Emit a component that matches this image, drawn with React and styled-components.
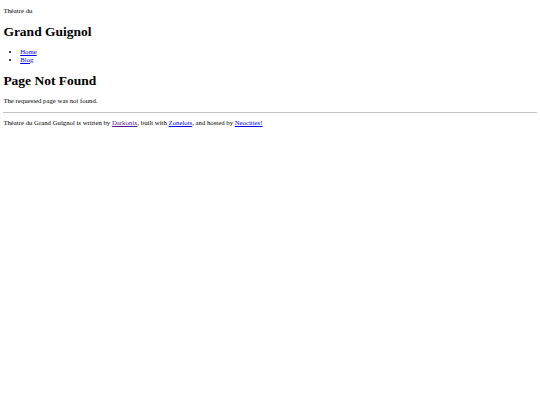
import React from 'react'
import styled, { createGlobalStyle } from 'styled-components'

// sizes are a default-styled page shrunk to 540px wide (16px -> 6.75px)
const Global = createGlobalStyle`
body{
    margin:0 3.375px 3.375px;
    font-family:"Liberation Serif", "Times New Roman", serif;
    font-size:6.75px;
    line-height:1.149;
    color:#000;
    background:#fff;
}
`

const Kicker = styled.p`
margin:1em 0;
`
const Title = styled.h1`
font-size:2em;
margin:0.67em 0;
font-weight:bold;
`
const Nav = styled.ul`
margin:1em 0;
padding-left:16.875px;
list-style:disc;
`
const Link = styled.a`
color:${p => (p.$visited ? '#551a8b' : '#0000ee')};
text-decoration:underline;
`
const Text = styled.p`
margin:1em 0;
`
const Rule = styled.hr`
margin:3.375px 0;
height:0;
border:none;
border-top:1px solid #c4c4c4;
`

export default function App() {
    return (
        <>
            <Global />
            <header>
                <Kicker>Théatre du</Kicker>
                <Title>Grand Guignol</Title>
                <Nav>
                    <li><Link href="#">Home</Link></li>
                    <li><Link href="#">Blog</Link></li>
                </Nav>
            </header>
            <main>
                <Title>Page Not Found</Title>
                <Text>The requested page was not found.</Text>
            </main>
            <Rule />
            <footer>
                <Text>
                    Théatre du Grand Guignol is written by <Link href="#" $visited>Darkonix</Link>, built with <Link href="#">Zonelots</Link>, and hosted by <Link href="#">Neocities!</Link>
                </Text>
            </footer>
        </>
    )
}
